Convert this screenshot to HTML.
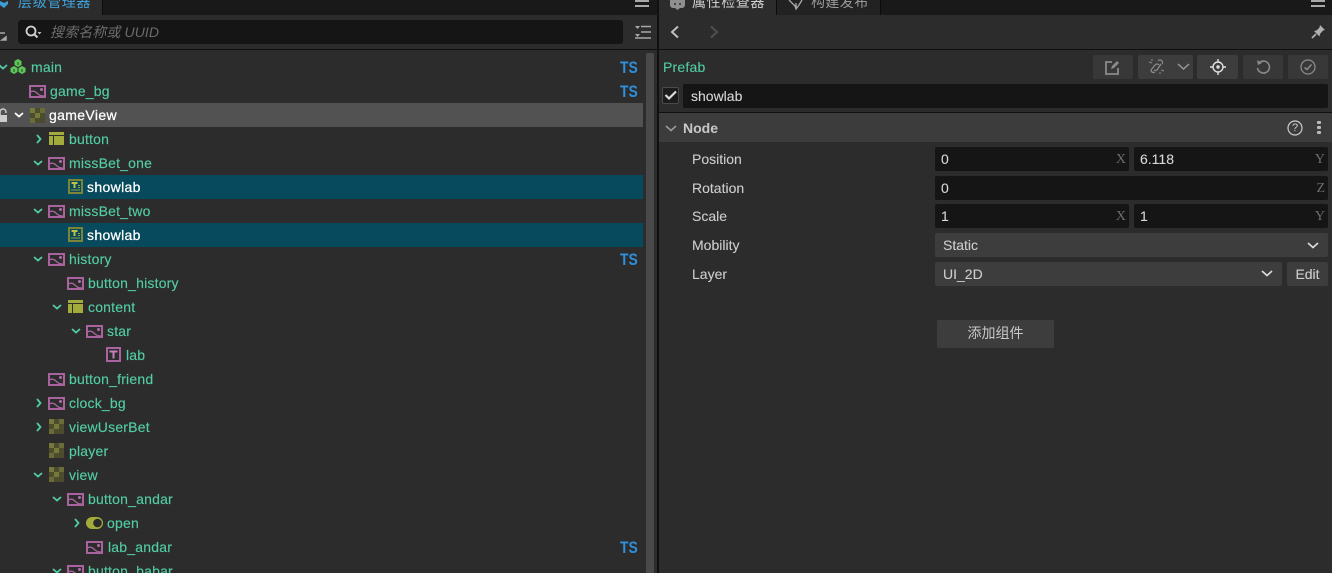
<!DOCTYPE html>
<html><head><meta charset="utf-8">
<style>
html,body{margin:0;padding:0;width:1332px;height:573px;overflow:hidden;background:#2c2c2c;font-family:"Liberation Sans","Noto Sans CJK SC",sans-serif;font-size:14px;}
.a{position:absolute}
#root{position:relative;width:1332px;height:573px;overflow:hidden}
.t{position:absolute;color:#52cca4;line-height:24px;height:24px;white-space:nowrap;letter-spacing:.2px;-webkit-text-stroke:.15px #52cca4}
.w{color:#fff;letter-spacing:.35px;-webkit-text-stroke:.25px #fff}
.ts{position:absolute;left:620px;width:22px;color:#2f8fdb;font-weight:bold;font-size:17px;line-height:24px;height:24px;margin-top:1px;transform:scaleX(.82);transform-origin:left center}
.l{position:absolute;left:692px;color:#cdcdcd;line-height:20px;-webkit-text-stroke:.1px #cdcdcd}
.in{position:absolute;background:#151515;border-radius:2px;color:#d8d8d8;line-height:24px;height:24px;text-indent:6px;-webkit-text-stroke:.1px #d8d8d8}
.sl{position:absolute;background:#3d3d3d;border-radius:2px;color:#cdcdcd;line-height:24px;height:24px;text-indent:8px;-webkit-text-stroke:.1px #cdcdcd}
.ax{position:absolute;right:3px;top:1px;color:#6e6e6e;font-family:"Liberation Serif",serif;font-size:14px;text-indent:0;-webkit-text-stroke:0}
.btn{position:absolute;top:55px;height:24px;background:#383838;border-radius:2px}
svg{position:absolute;overflow:visible}
</style></head><body><div id="root">
<svg width="0" height="0" style="position:absolute"><defs>
<symbol id="img" viewBox="0 0 17 13" overflow="visible"><rect x="1" y="1" width="15" height="11" fill="none" stroke="#a9639f" stroke-width="2"/><path d="M1 7c4-2 6 0 8 2s4 2 7 2" fill="none" stroke="#a9639f" stroke-width="1.300"/><circle cx="12.500" cy="4.500" r="1.500" fill="#b06ca6"/></symbol>
<symbol id="chk" viewBox="0 0 15 15"><g fill="#77793a"><rect x="0" y="0" width="5" height="5"/><rect x="10" y="0" width="5" height="5" fill="#6a6b36"/><rect x="5" y="5" width="5" height="5"/><rect x="0" y="10" width="5" height="5" fill="#6a6b36"/><rect x="10" y="10" width="5" height="5" fill="#4a4b2d"/></g><g fill="#4c4d2e"><rect x="5" y="0" width="5" height="5"/><rect x="0" y="5" width="5" height="5"/><rect x="10" y="5" width="5" height="5"/><rect x="5" y="10" width="5" height="5"/></g></symbol>
<symbol id="lay" viewBox="0 0 15 13"><path d="M0 0h15v3H0zM0 4h4v9H0zM5 4h10v9H5z" fill="#a3ab3a"/></symbol>
<symbol id="lbl" viewBox="0 0 15 15"><rect x="1" y="1" width="13" height="13" fill="none" stroke="#7d8438" stroke-width="2"/><path d="M3.500 3h6v2H7.500v4h-2V5h-2z" fill="#bcc240"/><path d="M10 6h2v1h-2zM10 8h2v1h-2zM3 10.500h9v1H3z" fill="#9ca338"/></symbol>
<symbol id="dn" viewBox="0 0 10 6"><path d="M1 1l4 3.500L9 1" fill="none" stroke="#52cca4" stroke-width="1.800"/></symbol>
<symbol id="rt" viewBox="0 0 6 10"><path d="M1 1l3.500 4L1 9" fill="none" stroke="#52cca4" stroke-width="1.800"/></symbol>
</defs></svg>

<!-- LEFT header -->
<div class="a" style="left:0;top:0;width:1332px;height:15px;background:#191919"></div>
<div class="a" style="left:0;top:0;width:102px;height:15px;background:#2c2c2c"></div>
<div class="a" style="left:102px;top:0;width:1px;height:15px;background:#0c0c0c"></div>
<svg style="left:0;top:0" width="10" height="10"><path d="M0 1l4 2 4-2v3L4 8 0 5z" fill="#3c9fd6"/></svg>
<div class="a" style="left:18px;top:-8px;font-size:14px;line-height:20px;color:#3fa2da;letter-spacing:.6px">层级管理器</div>
<div class="a" style="left:635px;top:0;width:14px;height:2px;background:#a8a8a8"></div>
<div class="a" style="left:635px;top:5px;width:14px;height:2px;background:#a8a8a8"></div>
<div class="a" style="left:0;top:49px;width:1332px;height:1px;background:#0f0f0f"></div>
<div class="a" style="left:657px;top:0;width:2px;height:573px;background:#111"></div>

<!-- search toolbar -->
<svg style="left:0;top:32px" width="7" height="9"><path d="M0 1h5M6 5v3H2z" stroke="#aaa" stroke-width="1.500" fill="#aaa"/></svg>
<div class="a" style="left:18px;top:20px;width:605px;height:24px;background:#151515;border-radius:3px"></div>
<svg style="left:25px;top:25px" width="17" height="14"><circle cx="6" cy="6" r="4.500" fill="none" stroke="#d0d0d0" stroke-width="1.800"/><path d="M9.500 9.500l3 3" stroke="#d0d0d0" stroke-width="2"/><path d="M12.500 7h4l-2 2.500z" fill="#bbb"/></svg>
<div class="a" style="left:50px;top:22px;line-height:20px;color:#6c6c6c;font-style:italic;letter-spacing:.1px">搜索名称或 UUID</div>
<svg style="left:635px;top:25px" width="17" height="15"><path d="M0 1h5L2.500 4zM0 9h5l-2.500 3z" fill="#a8a8a8"/><path d="M6 1.500h10M6 7h10M0 13h16" stroke="#a8a8a8" stroke-width="1.400"/></svg>

<!-- tree rows backgrounds -->
<div class="a" style="left:0;top:103px;width:643px;height:24px;background:#525252"></div>
<div class="a" style="left:0;top:175px;width:643px;height:24px;background:#084a5d"></div>
<div class="a" style="left:0;top:223px;width:643px;height:24px;background:#084a5d"></div>
<div class="a" style="left:646px;top:53px;width:8px;height:520px;background:#4a4a4a;border-radius:2px 2px 0 0"></div>

<!-- main -->
<svg style="left:-2px;top:64px" width="10" height="6"><use href="#dn"/></svg>
<svg style="left:10px;top:59px" width="16" height="15" viewBox="0 0 16 15"><path d="M8 0l3.500 2v4L8 8 4.500 6V2zM4 7l3.500 2v4L4 15 .5 13V9zM12 7l3.500 2v4L12 15l-3.500-2V9z" fill="#5fc75a"/><path d="M8 3v3M4 10v3M12 10v3" stroke="#1d4a1c" stroke-width="1"/></svg>
<div class="t" style="left:31px;top:55px">main</div>
<div class="ts" style="top:55px">TS</div>
<!-- game_bg -->
<svg style="left:29px;top:85px" width="17" height="13"><use href="#img"/></svg>
<div class="t" style="left:50px;top:79px">game_bg</div>
<div class="ts" style="top:79px">TS</div>
<!-- gameView -->
<svg style="left:-3px;top:108px" width="11" height="14"><path d="M3 7V4a3 3 0 0 1 6 0v1" fill="none" stroke="#ccc" stroke-width="1.500"/><rect x="0" y="7" width="10" height="7" fill="#ccc"/></svg>
<svg style="left:14px;top:112px" width="10" height="6"><path d="M1 1l4 3.500L9 1" fill="none" stroke="#fff" stroke-width="1.800"/></svg>
<svg style="left:30px;top:108px" width="15" height="15"><use href="#chk"/></svg>
<div class="t w" style="left:49px;top:103px">gameView</div>
<!-- button -->
<svg style="left:36px;top:134px" width="6" height="10"><use href="#rt"/></svg>
<svg style="left:49px;top:132px" width="15" height="13"><use href="#lay"/></svg>
<div class="t" style="left:69px;top:127px">button</div>
<!-- missBet_one -->
<svg style="left:33px;top:160px" width="10" height="6"><use href="#dn"/></svg>
<svg style="left:48px;top:157px" width="17" height="13"><use href="#img"/></svg>
<div class="t" style="left:69px;top:151px">missBet_one</div>
<svg style="left:68px;top:179px" width="15" height="15"><use href="#lbl"/></svg>
<div class="t w" style="left:87px;top:175px">showlab</div>
<!-- missBet_two -->
<svg style="left:33px;top:208px" width="10" height="6"><use href="#dn"/></svg>
<svg style="left:48px;top:205px" width="17" height="13"><use href="#img"/></svg>
<div class="t" style="left:69px;top:199px">missBet_two</div>
<svg style="left:68px;top:227px" width="15" height="15"><use href="#lbl"/></svg>
<div class="t w" style="left:87px;top:223px">showlab</div>
<!-- history -->
<svg style="left:33px;top:256px" width="10" height="6"><use href="#dn"/></svg>
<svg style="left:48px;top:253px" width="17" height="13"><use href="#img"/></svg>
<div class="t" style="left:69px;top:247px">history</div>
<div class="ts" style="top:247px">TS</div>
<svg style="left:67px;top:277px" width="17" height="13"><use href="#img"/></svg>
<div class="t" style="left:88px;top:271px">button_history</div>
<!-- content -->
<svg style="left:52px;top:304px" width="10" height="6"><use href="#dn"/></svg>
<svg style="left:68px;top:300px" width="15" height="13"><use href="#lay"/></svg>
<div class="t" style="left:88px;top:295px">content</div>
<!-- star -->
<svg style="left:71px;top:328px" width="10" height="6"><use href="#dn"/></svg>
<svg style="left:86px;top:325px" width="17" height="13"><use href="#img"/></svg>
<div class="t" style="left:107px;top:319px">star</div>
<!-- lab -->
<svg style="left:106px;top:347px" width="15" height="15"><rect x="1" y="1" width="13" height="13" fill="none" stroke="#a9639f" stroke-width="2"/><path d="M3.500 3.500h8v2H8.500v6h-2v-6h-3z" fill="#c77fbd"/></svg>
<div class="t" style="left:126px;top:343px">lab</div>
<!-- button_friend -->
<svg style="left:48px;top:373px" width="17" height="13"><use href="#img"/></svg>
<div class="t" style="left:69px;top:367px">button_friend</div>
<!-- clock_bg -->
<svg style="left:36px;top:398px" width="6" height="10"><use href="#rt"/></svg>
<svg style="left:48px;top:397px" width="17" height="13"><use href="#img"/></svg>
<div class="t" style="left:69px;top:391px">clock_bg</div>
<!-- viewUserBet -->
<svg style="left:36px;top:422px" width="6" height="10"><use href="#rt"/></svg>
<svg style="left:49px;top:419px" width="15" height="15"><use href="#chk"/></svg>
<div class="t" style="left:69px;top:415px">viewUserBet</div>
<!-- player -->
<svg style="left:49px;top:443px" width="15" height="15"><use href="#chk"/></svg>
<div class="t" style="left:69px;top:439px">player</div>
<!-- view -->
<svg style="left:33px;top:472px" width="10" height="6"><use href="#dn"/></svg>
<svg style="left:49px;top:467px" width="15" height="15"><use href="#chk"/></svg>
<div class="t" style="left:69px;top:463px">view</div>
<!-- button_andar -->
<svg style="left:52px;top:496px" width="10" height="6"><use href="#dn"/></svg>
<svg style="left:67px;top:493px" width="17" height="13"><use href="#img"/></svg>
<div class="t" style="left:88px;top:487px">button_andar</div>
<!-- open -->
<svg style="left:74px;top:518px" width="6" height="10"><use href="#rt"/></svg>
<svg style="left:86px;top:517px" width="17" height="12"><rect width="17" height="12" rx="6" fill="#a3ab3a"/><circle cx="11.500" cy="6" r="4.300" fill="#2a2a2a"/></svg>
<div class="t" style="left:107px;top:511px">open</div>
<!-- lab_andar -->
<svg style="left:86px;top:541px" width="17" height="13"><use href="#img"/></svg>
<div class="t" style="left:108px;top:535px">lab_andar</div>
<div class="ts" style="top:535px">TS</div>
<!-- button_babar -->
<svg style="left:52px;top:568px" width="10" height="6"><use href="#dn"/></svg>
<svg style="left:67px;top:565px" width="17" height="13"><use href="#img"/></svg>
<div class="t" style="left:88px;top:559px">button_babar</div>

<!-- RIGHT header -->
<div class="a" style="left:659px;top:0;width:117px;height:15px;background:#2c2c2c"></div>
<div class="a" style="left:776px;top:0;width:1px;height:15px;background:#0c0c0c"></div>
<div class="a" style="left:777px;top:0;width:103px;height:15px;background:#222"></div>
<div class="a" style="left:880px;top:0;width:1px;height:15px;background:#0c0c0c"></div>
<svg style="left:670px;top:0" width="16" height="10"><path d="M0 0h15v5a3 3 0 0 1-3 3h-2l-2.500 2L5 8H3a3 3 0 0 1-3-3z" fill="#8f8f8f"/><circle cx="5" cy="4" r="1" fill="#2c2c2c"/><circle cx="10" cy="4" r="1" fill="#2c2c2c"/></svg>
<div class="a" style="left:692px;top:-8px;line-height:20px;color:#cfcfcf;letter-spacing:.6px">属性检查器</div>
<svg style="left:788px;top:0" width="16" height="10"><path d="M1 0l6 6 1 3 3-4 3-5M8 9V3" fill="none" stroke="#aaa" stroke-width="1.300"/></svg>
<div class="a" style="left:811px;top:-8px;line-height:20px;color:#9a9a9a;letter-spacing:.4px">构建发布</div>
<div class="a" style="left:1311px;top:0;width:14px;height:2px;background:#a8a8a8"></div>
<div class="a" style="left:1311px;top:5px;width:14px;height:2px;background:#a8a8a8"></div>

<svg style="left:670px;top:25px" width="10" height="14"><path d="M8 1.500L2 7l6 5.500" fill="none" stroke="#c0c0c0" stroke-width="2"/></svg>
<svg style="left:709px;top:25px" width="10" height="14"><path d="M2 1.500L8 7l-6 5.500" fill="none" stroke="#505050" stroke-width="2"/></svg>
<svg style="left:1311px;top:24px" width="15" height="15"><path d="M9 1l5 5-2 .5-3 3.500-.5 2.500L3 7l2.500-.5L8.500 3.500z" fill="#b0b0b0"/><path d="M5 10l-4 4" stroke="#b0b0b0" stroke-width="1.800"/></svg>

<!-- Prefab row -->
<div class="a" style="left:663px;top:57px;line-height:20px;color:#52cca4;letter-spacing:.2px;-webkit-text-stroke:.1px #52cca4">Prefab</div>
<div class="btn" style="left:1093px;width:40px"></div>
<svg style="left:1105px;top:60px" width="15" height="15"><path d="M7 2H1v12h12V8" fill="none" stroke="#8a8a8a" stroke-width="1.800"/><path d="M6 9l1-3 5-5 2 2-5 5z" fill="#8a8a8a"/></svg>
<div class="btn" style="left:1138px;width:55px;background:#3d3d3d"></div>
<svg style="left:1148px;top:59px" width="17" height="16"><path d="M3 11l4-5a2.500 2.500 0 0 1 4 0M7 13a2.500 2.500 0 0 1-4-2M13 5l-4 6a2.500 2.500 0 0 1-3 0M10 2a2.500 2.500 0 0 1 4 3" fill="none" stroke="#8a8a8a" stroke-width="1.300"/><path d="M1 3l3 1M4 0v2M16 12l-3-1M12 15v-2" stroke="#8a8a8a" stroke-width="1"/></svg>
<svg style="left:1177px;top:63px" width="14" height="8"><path d="M1 1l5.500 5L12 1" fill="none" stroke="#999" stroke-width="1.500"/></svg>
<div class="btn" style="left:1197px;width:41px;background:#3d3d3d"></div>
<svg style="left:1210px;top:59px" width="16" height="16"><circle cx="8" cy="8" r="5" fill="none" stroke="#e0e0e0" stroke-width="1.400"/><circle cx="8" cy="8" r="1.700" fill="#e0e0e0"/><path d="M8 0v3M8 13v3M0 8h3M13 8h3" stroke="#e0e0e0" stroke-width="1.400"/></svg>
<div class="btn" style="left:1243px;width:40px"></div>
<svg style="left:1255px;top:59px" width="15" height="16"><path d="M3.500 3.500A6 6 0 1 1 1.500 9" fill="none" stroke="#8a8a8a" stroke-width="1.600" transform="translate(1 0)"/><path d="M2 1l1 5 4-2z" fill="#8a8a8a"/></svg>
<div class="btn" style="left:1288px;width:40px"></div>
<svg style="left:1300px;top:59px" width="16" height="16"><circle cx="8" cy="8" r="7" fill="none" stroke="#8a8a8a" stroke-width="1.300"/><path d="M4.500 8.500l2.500 2 4.500-5" fill="none" stroke="#8a8a8a" stroke-width="1.600"/></svg>

<!-- name row -->
<div class="a" style="left:662px;top:87px;width:15px;height:15px;background:#1c1c1c;border:1px solid #4a4a4a;border-radius:2px"></div>
<svg style="left:664px;top:90px" width="14" height="11"><path d="M1.500 5l3.500 3.500L12 1.500" fill="none" stroke="#ddd" stroke-width="2.200"/></svg>
<div class="in" style="left:683px;top:84px;width:645px;text-indent:8px">showlab</div>
<div class="a" style="left:659px;top:112px;width:673px;height:1px;background:#111"></div>

<!-- Node header -->
<div class="a" style="left:659px;top:113px;width:673px;height:29px;background:#3c3c3c"></div>
<svg style="left:665px;top:125px" width="12" height="7"><path d="M1 1l5 4.500L11 1" fill="none" stroke="#9a9a9a" stroke-width="1.600"/></svg>
<div class="a" style="left:683px;top:118px;line-height:20px;font-weight:bold;color:#c8c8c8">Node</div>
<svg style="left:1287px;top:120px" width="16" height="16"><circle cx="8" cy="8" r="7" fill="none" stroke="#ccc" stroke-width="1.200"/></svg>
<div class="a" style="left:1287px;top:120px;width:16px;text-align:center;font-size:11px;line-height:16px;color:#ccc">?</div>
<div class="a" style="left:1317px;top:121px;width:4px;height:3px;background:#bbb;border-radius:1px"></div>
<div class="a" style="left:1317px;top:126px;width:4px;height:3px;background:#bbb;border-radius:1px"></div>
<div class="a" style="left:1317px;top:131px;width:4px;height:3px;background:#bbb;border-radius:1px"></div>

<!-- props -->
<div class="l" style="top:149px">Position</div>
<div class="in" style="left:935px;top:147px;width:194px">0<span class="ax">X</span></div>
<div class="in" style="left:1134px;top:147px;width:194px">6.118<span class="ax">Y</span></div>
<div class="l" style="top:178px">Rotation</div>
<div class="in" style="left:935px;top:176px;width:393px">0<span class="ax">Z</span></div>
<div class="l" style="top:206px">Scale</div>
<div class="in" style="left:935px;top:204px;width:194px">1<span class="ax">X</span></div>
<div class="in" style="left:1134px;top:204px;width:194px">1<span class="ax">Y</span></div>
<div class="l" style="top:235px">Mobility</div>
<div class="sl" style="left:935px;top:233px;width:393px">Static</div>
<svg style="left:1307px;top:242px" width="12" height="8"><path d="M1 1l5 4.500L11 1" fill="none" stroke="#ddd" stroke-width="1.600"/></svg>
<div class="l" style="top:264px">Layer</div>
<div class="sl" style="left:935px;top:262px;width:347px">UI_2D</div>
<svg style="left:1261px;top:270px" width="12" height="8"><path d="M1 1l5 4.500L11 1" fill="none" stroke="#ddd" stroke-width="1.600"/></svg>
<div class="sl" style="left:1287px;top:262px;width:41px;text-indent:0;text-align:center">Edit</div>
<div class="a" style="left:937px;top:320px;width:117px;height:28px;background:#3d3d3d;border-radius:2px;color:#c8c8c8;text-align:center;line-height:27px;">添加组件</div>
</div></body></html>
